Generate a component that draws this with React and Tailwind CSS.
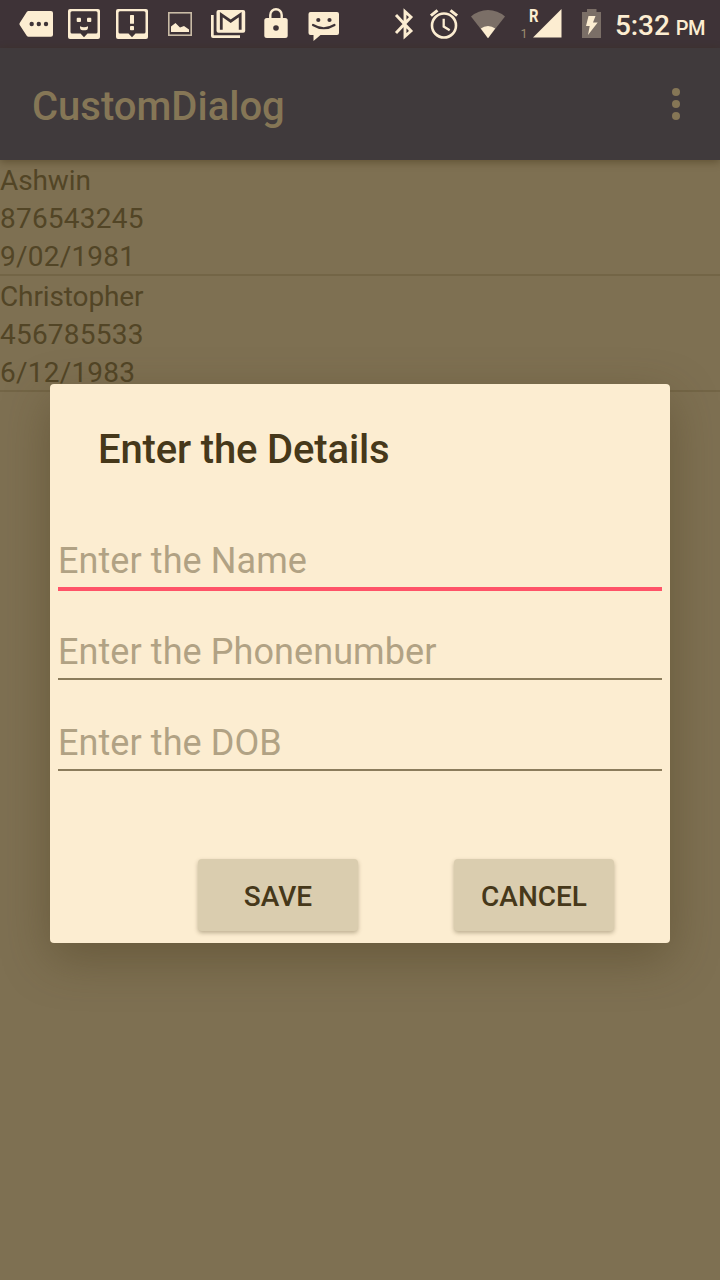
import React from "react";

const CREAM = "#fcedd1";
const DARK = "#3e3337";
const DIM = "#7b6f67";

function Glyph({ x, w = 48, children }) {
  return (
    <svg className="block shrink-0" width={w} height="48" viewBox={`${x} 0 ${w} 48`} fill={CREAM}>
      {children}
    </svg>
  );
}

function NoticeFrame({ x }) {
  return (
    <g transform={`translate(${x} 0)`}>
      <rect x="0" y="9" width="32" height="30" rx="2" />
      <path fill={DARK} d="M4 11.2H28A1.5 1.5 0 0 1 29.5 12.7V32A1.5 1.5 0 0 1 28 33.5H19.5L16 37.2L12.5 33.5H4A1.5 1.5 0 0 1 2.5 32V12.7A1.5 1.5 0 0 1 4 11.2Z" />
    </g>
  );
}

function StatusBar() {
  return (
    <div className="flex h-12 items-center bg-[#3e3337] pl-3 text-[#fcedd1]">
      <Glyph x={12}>
        <path d="M28.5 11H51a2 2 0 0 1 2 2V34.700a2 2 0 0 1-2 2H28.500a2 2 0 0 1-1.600-.8L19.700 25a2 2 0 0 1 0-2L26.900 11.800a2 2 0 0 1 1.600-.8Z" />
        <g fill={DARK}>
          <circle cx="31.700" cy="24" r="2.200" />
          <circle cx="38.800" cy="24" r="2.200" />
          <circle cx="46" cy="24" r="2.200" />
        </g>
      </Glyph>
      <Glyph x={60}>
        <NoticeFrame x={68} />
        <rect x="76.700" y="17.700" width="4.300" height="4.300" rx="1" />
        <rect x="87" y="17.700" width="4.300" height="4.300" rx="1" />
        <path d="M80 26.300q4 2 8 0v1.700q-.3 2.200-2.500 2.200h-3q-2.200 0-2.500-2.200Z" />
      </Glyph>
      <Glyph x={108}>
        <NoticeFrame x={116} />
        <rect x="130" y="15" width="4" height="8.700" rx=".5" />
        <rect x="130" y="26" width="4" height="4.300" rx=".8" />
      </Glyph>
      <Glyph x={156}>
        <rect x="168.800" y="12.800" width="22.400" height="22.400" fill="none" stroke="#c9bba5" strokeWidth="1.600" />
        <path d="M171 32V26.500L175.500 23L180 27.500L184 26L189 29.500V32Z" />
      </Glyph>
      <Glyph x={204}>
        <path d="M211 15h2.700v20.300H240V38H213a2 2 0 0 1-2-2Z" />
        <rect x="216.500" y="10" width="28.700" height="22.800" rx="2" />
        <path d="M221.300 29.800V14.700L230.700 21.200L240.200 14.700V29.800" fill="none" stroke={DARK} strokeWidth="2.800" />
      </Glyph>
      <Glyph x={252}>
        <rect x="264.300" y="18" width="23.400" height="20" rx="2.500" />
        <path d="M270.300 19V15a5.700 5.700 0 0 1 11.400 0V19" fill="none" stroke={CREAM} strokeWidth="2.400" />
        <circle cx="276" cy="28" r="2.800" fill={DARK} />
      </Glyph>
      <Glyph x={300}>
        <path d="M310.500 12H337a2 2 0 0 1 2 2V33a2 2 0 0 1-2 2H320.500L313.500 41V35H310.500a2 2 0 0 1-2-2V14a2 2 0 0 1 2-2Z" />
        <circle cx="318.300" cy="20" r="2.100" fill={DARK} />
        <circle cx="329.500" cy="20" r="2.100" fill={DARK} />
        <path d="M313 25Q323.800 31.500 334.500 25" fill="none" stroke={DARK} strokeWidth="2.200" strokeLinecap="round" />
      </Glyph>

      <div className="ml-8 flex">
        <Glyph x={380} w={44}>
          <path d="M396 15L411 31L405 36.300V11.600L411 17L396 33" fill="none" stroke={CREAM} strokeWidth="2.900" />
        </Glyph>
        <Glyph x={424} w={40}>
          <g fill="none" stroke={CREAM} strokeWidth="2.600">
            <circle cx="444" cy="25.500" r="12" />
            <path d="M443.700 18.700V26.500L449.700 30.300" strokeWidth="2.300" />
            <path d="M430.900 15.700L437.500 10.300M450.500 10.300L457.100 15.700" strokeWidth="3" />
          </g>
        </Glyph>
        <Glyph x={464} w={48}>
          <path fill={DIM} d="M488 38.300L471 16.500Q478.500 10 488 10T505 16.500Z" />
          <path d="M488 38.300L480.800 28.500Q484 26 488 26T495.200 28.500Z" />
        </Glyph>
        <Glyph x={512} w={60}>
          <path d="M533 37.500L561.500 9V37.500Z" />
          <text x="529" y="21.800" fontFamily="Roboto, sans-serif" fontWeight="700" fontSize="17.500" textLength="9.500" lengthAdjust="spacingAndGlyphs">R</text>
          <text x="520.500" y="37.800" fontFamily="Roboto, sans-serif" fontSize="12.500" fill="#9a8c6f">1</text>
        </Glyph>
        <Glyph x={572} w={43}>
          <path fill={DIM} d="M582 12h5V9h9.500v3H601V38H582Z" />
          <path d="M588.500 16H595.500L593 22.500H597.700L588 35L589.700 26H586Z" />
        </Glyph>
      </div>
      <div className="flex items-baseline gap-[6px] pt-[6px] font-medium">
        <span className="text-[28px] leading-8 tracking-[-0.1px]">5:32</span>
        <span className="text-[20px] leading-8 tracking-[-0.5px]">PM</span>
      </div>
    </div>
  );
}

function AppBar() {
  return (
    <header className="relative flex h-28 items-center justify-between bg-[#403a3c] pr-10 pl-8 text-[#857656] shadow-[0_2px_8px_rgba(60,45,15,0.45)]">
      <h1 className="pt-[6px] text-[40px] leading-[48px] font-medium">CustomDialog</h1>
      <div className="flex flex-col gap-1">
        <span className="size-2 rounded-full bg-[#857656]" />
        <span className="size-2 rounded-full bg-[#857656]" />
        <span className="size-2 rounded-full bg-[#857656]" />
      </div>
    </header>
  );
}

const contacts = [
  ["Ashwin", "876543245", "9/02/1981"],
  ["Christopher", "456785533", "6/12/1983"],
];

const fields = [
  { hint: "Enter the Name", style: "h-[81px] border-b-4 border-[#ff5368] pb-[5px]" },
  { hint: "Enter the Phonenumber", style: "h-[89px] border-b-2 border-[#8b7c5c] pb-[5px]" },
  { hint: "Enter the DOB", style: "h-[91px] border-b-2 border-[#8b7c5c] pb-[5px]" },
];

function Dialog() {
  return (
    <section className="absolute top-[384px] left-[50px] h-[559px] w-[620px] rounded bg-[#fcedd1] px-2 text-[#46381a] shadow-[0_16px_48px_rgba(70,54,24,0.4)]">
      <h2 className="h-[126px] pt-[42px] pl-10 text-[40px] leading-[48px] font-medium tracking-[-0.15px]">Enter the Details</h2>
      {fields.map((f) => (
        <div key={f.hint} className={`flex items-end text-[36px] leading-[42px] tracking-[0.08px] text-[#b1a284] ${f.style}`}>
          {f.hint}
        </div>
      ))}
      <div className="mt-[88px] flex gap-24 pl-[140px]">
        {["SAVE", "CANCEL"].map((label) => (
          <button
            key={label}
            className="h-[72px] w-40 rounded-[4px] bg-[#dacdaf] pt-1 text-[28px] font-medium shadow-[0_2px_4px_rgba(70,56,26,0.35)]"
          >
            {label}
          </button>
        ))}
      </div>
    </section>
  );
}

export default function App() {
  return (
    <div className="relative h-[1280px] w-[720px] overflow-hidden bg-[#7e7052] font-['Roboto',sans-serif]">
      <StatusBar />
      <AppBar />
      <ul>
        {contacts.map(([name, phone, dob]) => (
          <li key={name} className="border-b-2 border-[#736546] text-[28px] leading-[38px] text-[#524526]">
            <div className="h-[38px] pt-[2px] tracking-[-0.12px]">{name}</div>
            <div className="h-[38px] pt-[2px] tracking-[0.22px]">{phone}</div>
            <div className="h-[38px] pt-[2px] tracking-[0.22px]">{dob}</div>
          </li>
        ))}
      </ul>
      <Dialog />
    </div>
  );
}
